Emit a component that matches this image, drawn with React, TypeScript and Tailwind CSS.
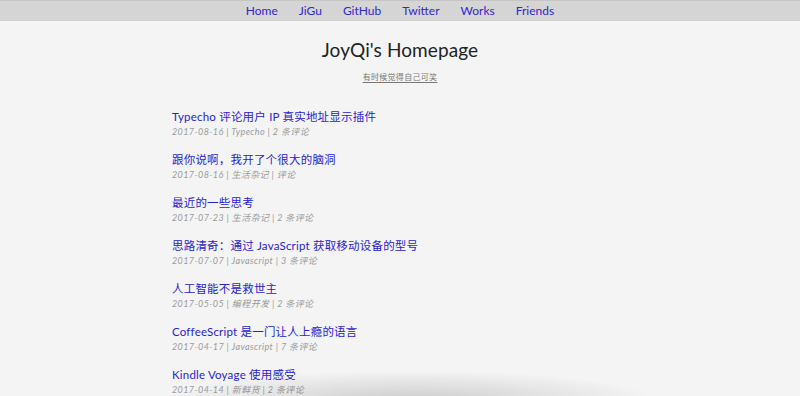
const navLinks = ["Home", "JiGu", "GitHub", "Twitter", "Works", "Friends"];

const posts = [
  { title: "Typecho 评论用户 IP 真实地址显示插件", date: "2017-08-16", cat: "Typecho", comments: "2 条评论" },
  { title: "跟你说啊，我开了个很大的脑洞", date: "2017-08-16", cat: "生活杂记", comments: "评论" },
  { title: "最近的一些思考", date: "2017-07-23", cat: "生活杂记", comments: "2 条评论" },
  { title: "思路清奇：通过 JavaScript 获取移动设备的型号", date: "2017-07-07", cat: "Javascript", comments: "3 条评论" },
  { title: "人工智能不是救世主", date: "2017-05-05", cat: "编程开发", comments: "2 条评论" },
  { title: "CoffeeScript 是一门让人上瘾的语言", date: "2017-04-17", cat: "Javascript", comments: "7 条评论" },
  { title: "Kindle Voyage 使用感受", date: "2017-04-14", cat: "新鲜货", comments: "2 条评论" },
];

export default function App() {
  return (
    <div className="relative h-[396px] overflow-hidden bg-[#f4f4f4] font-['Lato','Noto_Sans_CJK_SC',sans-serif]">
      {/* Nav */}
      <nav className="h-[21px] border-t border-[#c6c6c6] bg-[#d5d5d5] border-b border-b-[#cfcfcf]">
        <div className="flex items-center justify-center gap-[21px] pt-[2px] text-[12px] text-[#3226cf]">
          {navLinks.map((l) => (
            <a key={l} href="#" className="leading-[16px]">
              {l}
            </a>
          ))}
        </div>
      </nav>

      {/* Header */}
      <header className="pt-[17px] text-center">
        <h1 className="text-[19px] leading-[24px] font-normal tracking-[0.1px] text-[#222]">
          JoyQi's Homepage
        </h1>
        <a href="#" className="mt-[3px] inline-block text-[8px] leading-[10px] tracking-[0.3px] text-[#777] underline underline-offset-[2px]">
          有时候觉得自己可笑
        </a>
      </header>

      {/* Posts */}
      <main className="mx-auto mt-[22px] w-[456px]">
        {posts.map((p) => (
          <article key={p.title + p.date} className="mb-[12px]">
            <h2 className="text-[11.5px] leading-[17px] tracking-[0.2px] text-[#2a22d2]">
              <a href="#">{p.title}</a>
            </h2>
            <p className="mt-[0px] text-[9px] leading-[14px] italic tracking-[0.4px] text-[#9a9a9a]">
              {p.date} | <a href="#">{p.cat}</a> | <a href="#">{p.comments}</a>
            </p>
          </article>
        ))}
      </main>

      {/* bottom shadow overlay */}
      <div className="pointer-events-none absolute bottom-[-34px] left-[160px] h-[60px] w-[500px] rounded-[50%] bg-[radial-gradient(ellipse_at_center,rgba(0,0,0,0.16),rgba(0,0,0,0)_70%)]" />
    </div>
  );
}
